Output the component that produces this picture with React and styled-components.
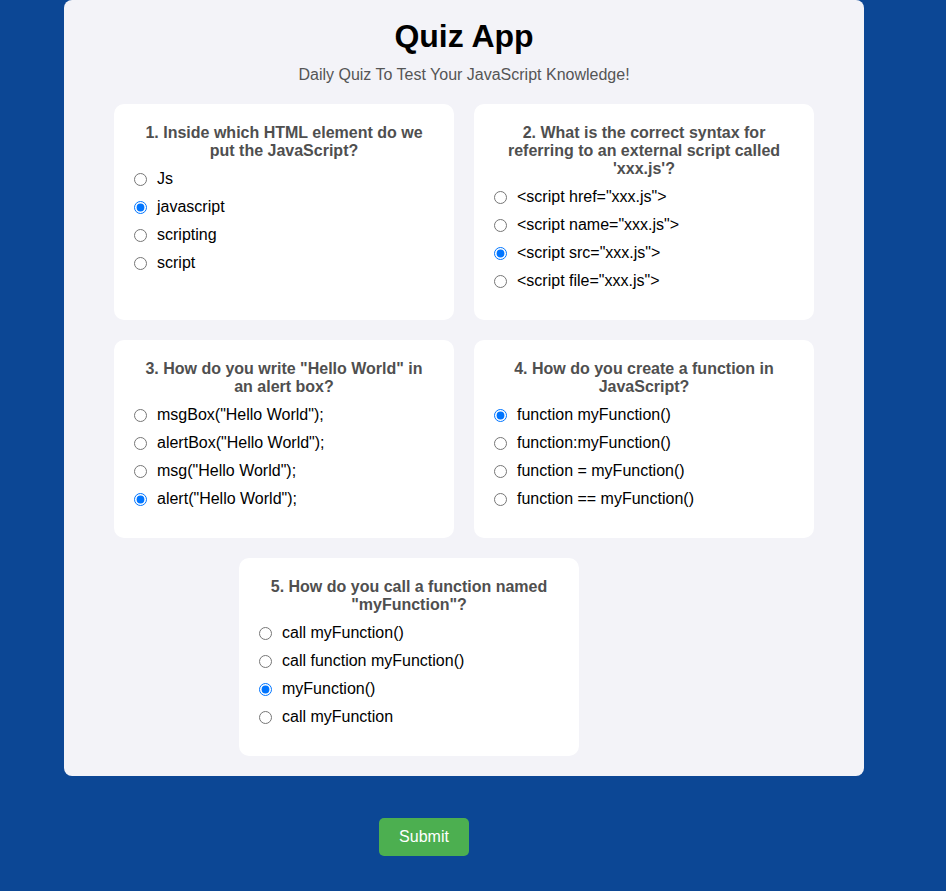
import styled, { createGlobalStyle } from "styled-components";

const GlobalStyle = createGlobalStyle`
  html, body {
    margin: 0;
    background: #0c4795;
    font-family: Arial, "Liberation Sans", sans-serif;
  }
`;

const Page = styled.div`
  padding-right: 18px;
  min-height: 891px;
`;

const Container = styled.main`
  width: 800px;
  box-sizing: border-box;
  margin: 0 auto;
  padding: 18px 50px 20px;
  background: #f3f3f8;
  border-radius: 8px;
`;

const Title = styled.h1`
  margin: 0;
  font-size: 32px;
  line-height: 37px;
  text-align: center;
  color: #000;
`;

const Subtitle = styled.p`
  margin: 11px 0 20px;
  font-size: 16px;
  line-height: 18px;
  text-align: center;
  color: #555;
`;

const Grid = styled.div`
  display: grid;
  grid-template-columns: 340px 340px;
  gap: 20px;
`;

const Card = styled.section`
  box-sizing: border-box;
  background: #fff;
  border-radius: 10px;
  padding: 20px 20px 25px;
  ${(p) =>
    p.$single &&
    `
    grid-column: 1 / span 2;
    justify-self: start;
    width: 340px;
    margin-left: 125px;
  `}
`;

const Question = styled.h3`
  margin: 0 0 5px;
  font-size: 16px;
  line-height: 18px;
  font-weight: 700;
  text-align: center;
  color: #4f4f4f;
`;

const Options = styled.ul`
  list-style: none;
  margin: 0;
  padding: 0;
`;

const Option = styled.li`
  height: 28px;
  display: flex;
  align-items: center;
`;

const Label = styled.label`
  display: flex;
  align-items: center;
  font-size: 16px;
  color: #000;
  cursor: pointer;

  input {
    width: 13px;
    height: 13px;
    margin: 0 10px 0 0;
  }
`;

const ButtonRow = styled.div`
  display: flex;
  justify-content: center;
  padding: 42px 80px 0 0;
`;

const SubmitButton = styled.button`
  border: 0;
  border-radius: 5px;
  background: #4caf50;
  color: #fff;
  font-family: Arial, "Liberation Sans", sans-serif;
  font-size: 16px;
  line-height: 18px;
  padding: 10px 20px;
  cursor: pointer;
`;

const quiz = [
  {
    q: "1. Inside which HTML element do we put the JavaScript?",
    options: ["Js", "javascript", "scripting", "script"],
    picked: 1,
  },
  {
    q: "2. What is the correct syntax for referring to an external script called 'xxx.js'?",
    options: [
      '<script href="xxx.js">',
      '<script name="xxx.js">',
      '<script src="xxx.js">',
      '<script file="xxx.js">',
    ],
    picked: 2,
  },
  {
    q: '3. How do you write "Hello World" in an alert box?',
    options: [
      'msgBox("Hello World");',
      'alertBox("Hello World");',
      'msg("Hello World");',
      'alert("Hello World");',
    ],
    picked: 3,
  },
  {
    q: "4. How do you create a function in JavaScript?",
    options: [
      "function myFunction()",
      "function:myFunction()",
      "function = myFunction()",
      "function == myFunction()",
    ],
    picked: 0,
  },
  {
    q: '5. How do you call a function named "myFunction"?',
    options: [
      "call myFunction()",
      "call function myFunction()",
      "myFunction()",
      "call myFunction",
    ],
    picked: 2,
  },
];

export default function App() {
  return (
    <>
      <GlobalStyle />
      <Page>
        <Container>
          <Title>Quiz App</Title>
          <Subtitle>Daily Quiz To Test Your JavaScript Knowledge!</Subtitle>
          <Grid>
            {quiz.map((item, i) => (
              <Card key={i} $single={i === 4}>
                <Question>{item.q}</Question>
                <Options>
                  {item.options.map((opt, j) => (
                    <Option key={j}>
                      <Label>
                        <input
                          type="radio"
                          name={`q${i}`}
                          defaultChecked={j === item.picked}
                        />
                        {opt}
                      </Label>
                    </Option>
                  ))}
                </Options>
              </Card>
            ))}
          </Grid>
        </Container>
        <ButtonRow>
          <SubmitButton type="button">Submit</SubmitButton>
        </ButtonRow>
      </Page>
    </>
  );
}
